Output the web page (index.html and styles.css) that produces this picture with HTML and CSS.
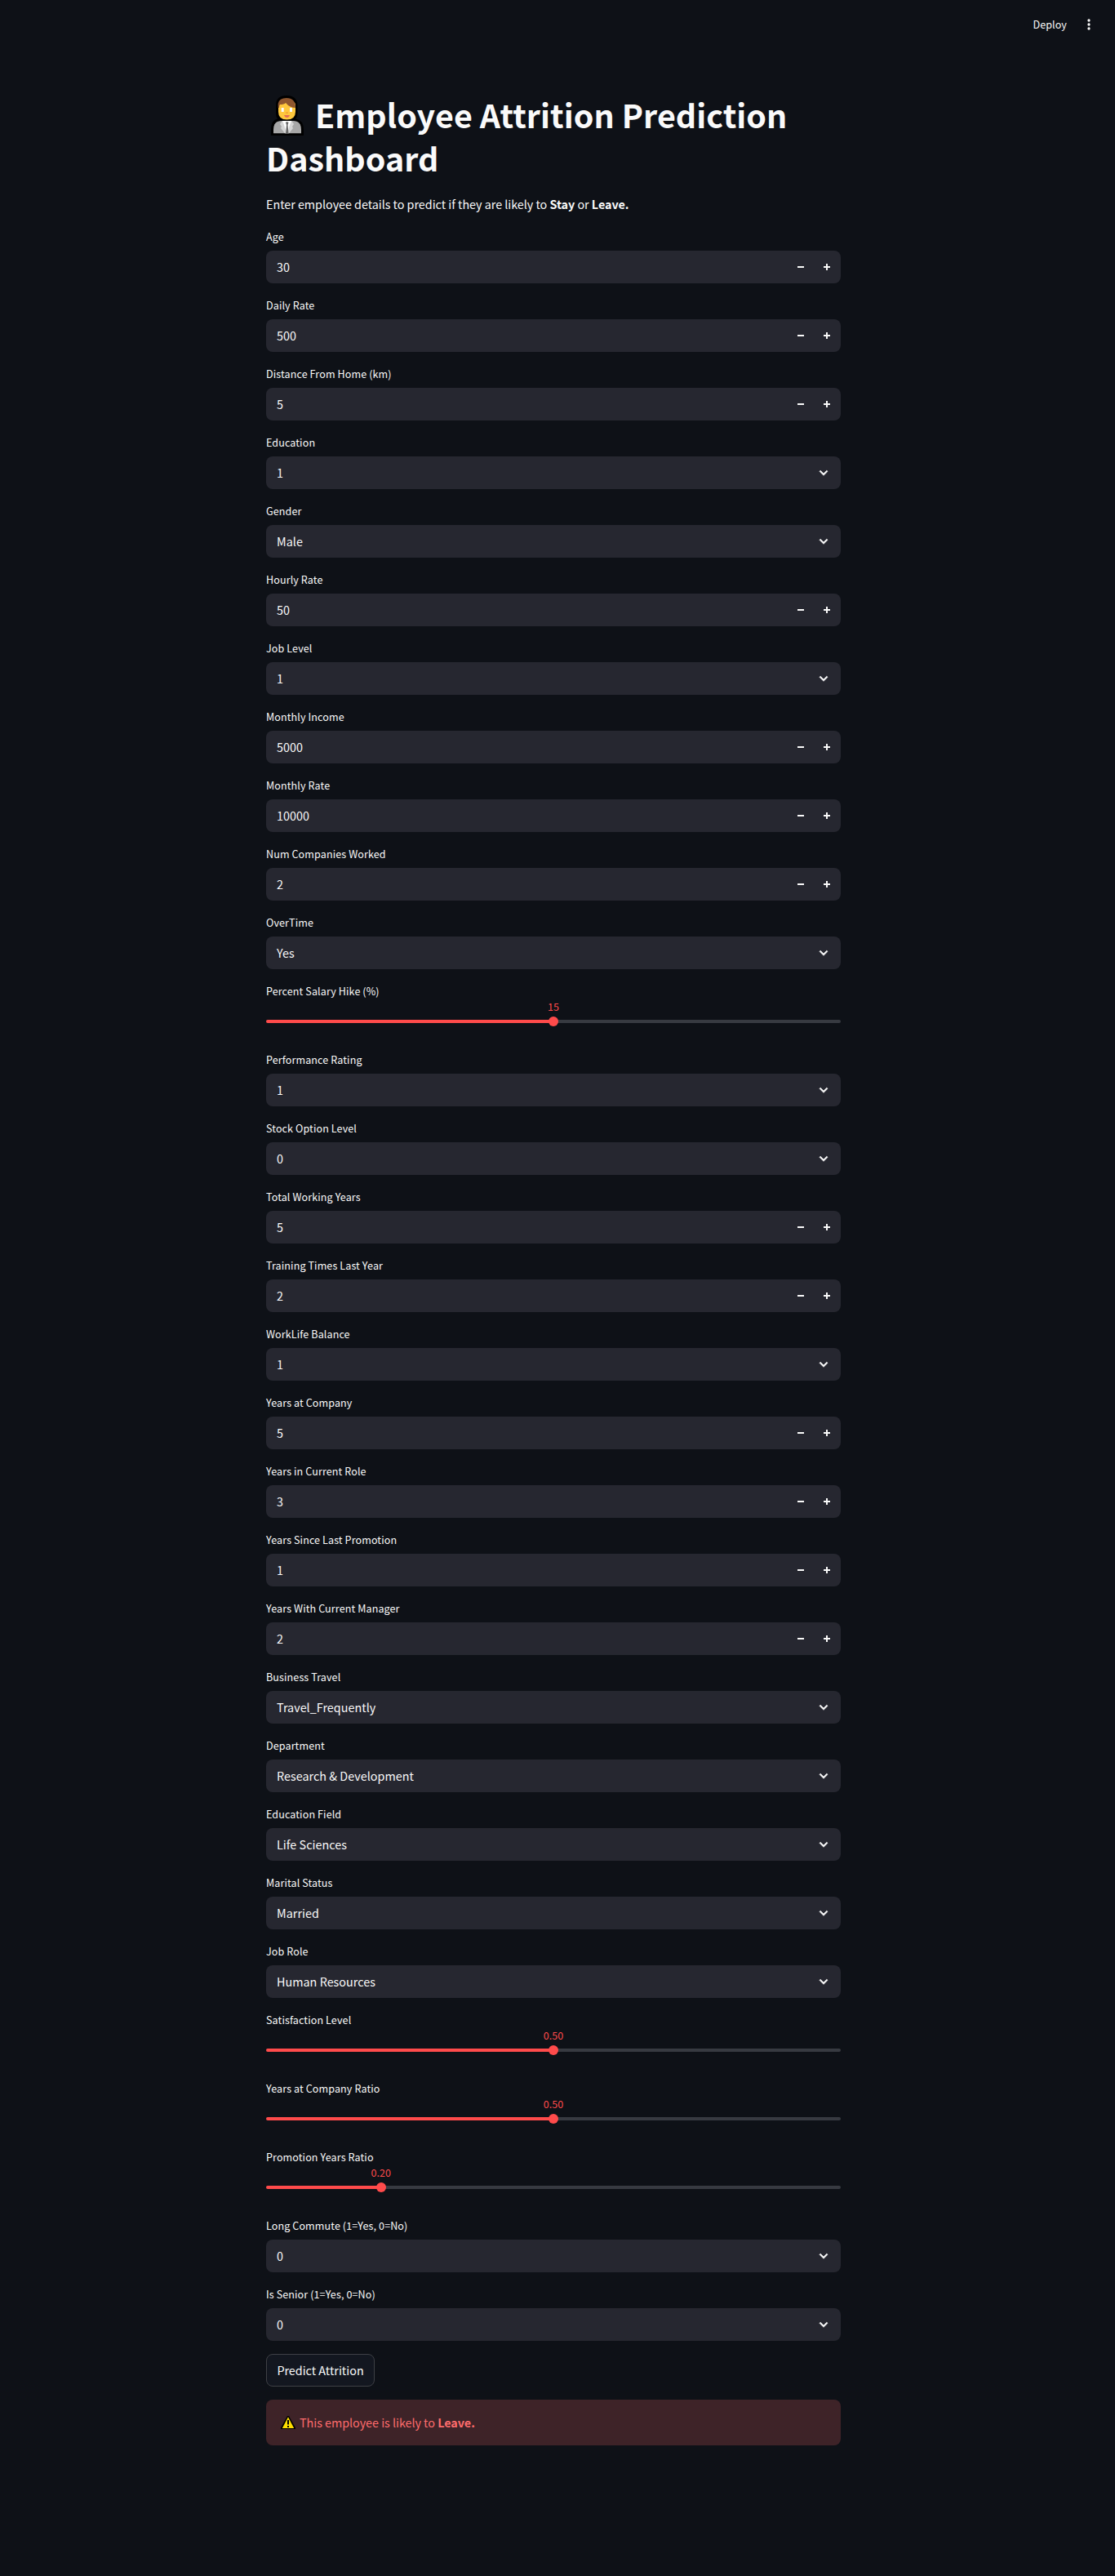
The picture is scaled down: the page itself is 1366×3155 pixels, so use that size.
FILE: index.html
```html
<!DOCTYPE html>
<html lang="en">
<head>
<meta charset="utf-8">
<title>Employee Attrition Prediction Dashboard</title>
<link rel="stylesheet" href="styles.css">
</head>
<body>
<svg class="sprite" aria-hidden="true">
  <symbol id="minus" viewBox="0 0 8 8"><path d="M0 3v2h8V3z"/></symbol>
  <symbol id="plus" viewBox="0 0 8 8"><path d="M3 0v3H0v2h3v3h2V5h3V3H5V0z"/></symbol>
  <symbol id="chevron" viewBox="0 0 24 24"><path stroke="currentColor" stroke-width=".8" d="M16.59 8.59 12 13.17 7.41 8.59 6 10l6 6 6-6z"/></symbol>
</svg>
<header class="toolbar">
  <span class="deploy">Deploy</span>
  <svg class="kebab" viewBox="0 0 24 24"><circle cx="12" cy="6" r="2"/><circle cx="12" cy="12" r="2"/><circle cx="12" cy="18" r="2"/></svg>
</header>
<main class="content">
  <h1 class="title"><svg class="worker" viewBox="0 0 50 50"><path fill="#000" d="M12 12Q12 0 25 0T38.500 12V22Q38.500 26 36 28.500Q46 30 46 42V49H6V42Q6 30 14 28.500Q12 26 12 22Z"/><path fill="#a7a7a7" d="M9 46.300V42Q9 31 19 31H33Q43 31 43 42V46.300Z"/><path fill="#d5d5d5" d="M20 31 17 35 19 38 18 40 23 46.300H28L33 40 32 38 34 35 31 31Z"/><path fill="#fff" d="M20 31H31L29 36 26 46H25L22 36Z"/><path fill="#686868" d="M24 33 25.500 32 27.500 33 26.500 36 27.500 46.300H24L25 36Z"/><path fill="#ffc83d" d="M15 13Q15 5 25.500 5T36 13V20Q36 29.500 25.500 29.500T15 20Z"/><path fill="#8f562e" d="M14.700 15V10Q16 3 25 3Q36 3 36 15Q29 15 24 9Q22 11 17 11Q16 12 16 15Z"/><path d="M18.700 15h3v5h-3zM29 15h3v5h-3z"/><path fill="#f29a31" d="M24 20.500h3v1.300h-3z"/><path fill="#e36b55" d="M22 24h7q-1 3-3.500 3T22 24z"/></svg> Employee Attrition Prediction Dashboard</h1>
  <p class="intro">Enter employee details to predict if they are likely to <strong>Stay</strong> or <strong>Leave.</strong></p>
  <form class="fields">
    <div class="field"><label>Age</label><div class="box"><span class="value">30</span><svg class="step"><use href="#minus"/></svg><svg class="step"><use href="#plus"/></svg></div></div>
    <div class="field"><label>Daily Rate</label><div class="box"><span class="value">500</span><svg class="step"><use href="#minus"/></svg><svg class="step"><use href="#plus"/></svg></div></div>
    <div class="field"><label>Distance From Home (km)</label><div class="box"><span class="value">5</span><svg class="step"><use href="#minus"/></svg><svg class="step"><use href="#plus"/></svg></div></div>
    <div class="field"><label>Education</label><div class="box"><span class="value">1</span><svg class="chevron"><use href="#chevron"/></svg></div></div>
    <div class="field"><label>Gender</label><div class="box"><span class="value">Male</span><svg class="chevron"><use href="#chevron"/></svg></div></div>
    <div class="field"><label>Hourly Rate</label><div class="box"><span class="value">50</span><svg class="step"><use href="#minus"/></svg><svg class="step"><use href="#plus"/></svg></div></div>
    <div class="field"><label>Job Level</label><div class="box"><span class="value">1</span><svg class="chevron"><use href="#chevron"/></svg></div></div>
    <div class="field"><label>Monthly Income</label><div class="box"><span class="value">5000</span><svg class="step"><use href="#minus"/></svg><svg class="step"><use href="#plus"/></svg></div></div>
    <div class="field"><label>Monthly Rate</label><div class="box"><span class="value">10000</span><svg class="step"><use href="#minus"/></svg><svg class="step"><use href="#plus"/></svg></div></div>
    <div class="field"><label>Num Companies Worked</label><div class="box"><span class="value">2</span><svg class="step"><use href="#minus"/></svg><svg class="step"><use href="#plus"/></svg></div></div>
    <div class="field"><label>OverTime</label><div class="box"><span class="value">Yes</span><svg class="chevron"><use href="#chevron"/></svg></div></div>
    <div class="field"><label>Percent Salary Hike (%)</label><div class="slider" style="--at: 50%"><div class="track"><div class="thumb"><span class="reading">15</span></div></div></div></div>
    <div class="field"><label>Performance Rating</label><div class="box"><span class="value">1</span><svg class="chevron"><use href="#chevron"/></svg></div></div>
    <div class="field"><label>Stock Option Level</label><div class="box"><span class="value">0</span><svg class="chevron"><use href="#chevron"/></svg></div></div>
    <div class="field"><label>Total Working Years</label><div class="box"><span class="value">5</span><svg class="step"><use href="#minus"/></svg><svg class="step"><use href="#plus"/></svg></div></div>
    <div class="field"><label>Training Times Last Year</label><div class="box"><span class="value">2</span><svg class="step"><use href="#minus"/></svg><svg class="step"><use href="#plus"/></svg></div></div>
    <div class="field"><label>WorkLife Balance</label><div class="box"><span class="value">1</span><svg class="chevron"><use href="#chevron"/></svg></div></div>
    <div class="field"><label>Years at Company</label><div class="box"><span class="value">5</span><svg class="step"><use href="#minus"/></svg><svg class="step"><use href="#plus"/></svg></div></div>
    <div class="field"><label>Years in Current Role</label><div class="box"><span class="value">3</span><svg class="step"><use href="#minus"/></svg><svg class="step"><use href="#plus"/></svg></div></div>
    <div class="field"><label>Years Since Last Promotion</label><div class="box"><span class="value">1</span><svg class="step"><use href="#minus"/></svg><svg class="step"><use href="#plus"/></svg></div></div>
    <div class="field"><label>Years With Current Manager</label><div class="box"><span class="value">2</span><svg class="step"><use href="#minus"/></svg><svg class="step"><use href="#plus"/></svg></div></div>
    <div class="field"><label>Business Travel</label><div class="box"><span class="value">Travel_Frequently</span><svg class="chevron"><use href="#chevron"/></svg></div></div>
    <div class="field"><label>Department</label><div class="box"><span class="value">Research &amp; Development</span><svg class="chevron"><use href="#chevron"/></svg></div></div>
    <div class="field"><label>Education Field</label><div class="box"><span class="value">Life Sciences</span><svg class="chevron"><use href="#chevron"/></svg></div></div>
    <div class="field"><label>Marital Status</label><div class="box"><span class="value">Married</span><svg class="chevron"><use href="#chevron"/></svg></div></div>
    <div class="field"><label>Job Role</label><div class="box"><span class="value">Human Resources</span><svg class="chevron"><use href="#chevron"/></svg></div></div>
    <div class="field"><label>Satisfaction Level</label><div class="slider" style="--at: 50%"><div class="track"><div class="thumb"><span class="reading">0.50</span></div></div></div></div>
    <div class="field"><label>Years at Company Ratio</label><div class="slider" style="--at: 50%"><div class="track"><div class="thumb"><span class="reading">0.50</span></div></div></div></div>
    <div class="field"><label>Promotion Years Ratio</label><div class="slider" style="--at: 20%"><div class="track"><div class="thumb"><span class="reading">0.20</span></div></div></div></div>
    <div class="field"><label>Long Commute (1=Yes, 0=No)</label><div class="box"><span class="value">0</span><svg class="chevron"><use href="#chevron"/></svg></div></div>
    <div class="field"><label>Is Senior (1=Yes, 0=No)</label><div class="box"><span class="value">0</span><svg class="chevron"><use href="#chevron"/></svg></div></div>
    <button class="predict" type="button">Predict Attrition</button>
    <div class="alert"><svg class="warning" viewBox="0 0 18 16"><path d="M8 0h2l8 14.500V16H0v-1.500z"/><path fill="#ffde00" d="M9 1.300 16.200 15H1.800z"/><path d="M8 5h2v5.500H8zM8 12h2v2H8z"/></svg><p>This employee is likely to <strong>Leave.</strong></p></div>
  </form>
</main>
</body>
</html>
```
FILE: styles.css
```css
* {
  box-sizing: border-box;
}

body {
  margin: 0;
  min-height: 3155px;
  background: #0e1117;
  color: #fafafa;
  /* The Latin glyphs of Noto Sans CJK are Source Sans, drawn about 1.117 times larger. */
  font-family: "Noto Sans CJK SC", "Noto Sans", sans-serif;
  font-size: 14.33px;
  line-height: 25.6px;
}

svg {
  display: block;
  flex: none;
  fill: currentColor;
}

.sprite {
  display: none;
}

.toolbar {
  display: flex;
  align-items: center;
  justify-content: flex-end;
  gap: 17px;
  height: 60px;
  padding-right: 22px;
}

.deploy {
  padding-bottom: 1px;
  font-size: 12.54px;
  letter-spacing: 0.1px;
}

.kebab {
  width: 20px;
  height: 20px;
}

.content {
  width: 704px;
  margin-left: 326px;
  padding-top: 54px;
}

.title {
  margin: 0;
  padding-bottom: 17px;
  font-size: 39.4px;
  font-weight: 700;
  line-height: 52.8px;
  letter-spacing: 0.06px;
}

.worker {
  display: inline-block;
  width: 50px;
  height: 50px;
  margin-right: 1px;
  vertical-align: -10px;
}

.intro {
  margin: 0 0 17px;
  letter-spacing: -0.02px;
}

.fields {
  display: flex;
  flex-direction: column;
  align-items: stretch;
  gap: 16px;
}

.field {
  height: 68px;
}

.field label {
  display: block;
  height: 24px;
  margin-bottom: 4px;
  font-size: 12.54px;
  line-height: 21px;
  letter-spacing: 0.11px;
}

.box {
  display: flex;
  align-items: center;
  height: 40px;
  padding: 0 13px;
  border-radius: 8px;
  background: #262730;
}

.value {
  flex: 1;
  padding-bottom: 1px;
  letter-spacing: 0.04px;
}

.step {
  width: 8px;
  height: 8px;
  margin-left: 24px;
}

.chevron {
  width: 20px;
  height: 20px;
  margin-right: -2px;
}

.slider {
  padding-top: 18px;
}

.track {
  position: relative;
  height: 4px;
  border-radius: 4px;
  background: linear-gradient(to right, #ff4b4b var(--at), #373a41 var(--at));
}

.thumb {
  position: absolute;
  top: -4px;
  left: var(--at);
  width: 12px;
  height: 12px;
  margin-left: -6px;
  border-radius: 50%;
  background: #ff4b4b;
}

.reading {
  position: absolute;
  bottom: 14px;
  left: 50%;
  transform: translateX(-50%);
  color: #ff4b4b;
  font-size: 12.54px;
  line-height: 21px;
}

.predict {
  align-self: flex-start;
  width: 133px;
  height: 40px;
  padding: 0 0 1px;
  border: 1px solid #3e4045;
  border-radius: 8px;
  background: #131720;
  color: inherit;
  font: inherit;
}

.alert {
  display: flex;
  align-items: center;
  gap: 5px;
  height: 56px;
  padding: 0 18px;
  border-radius: 8px;
  background: #3e2328;
  color: #ff6c6c;
}

.alert p {
  margin: 0;
  padding-bottom: 1px;
  letter-spacing: -0.02px;
}

.warning {
  width: 18px;
  height: 16px;
  fill: #000;
}
```
